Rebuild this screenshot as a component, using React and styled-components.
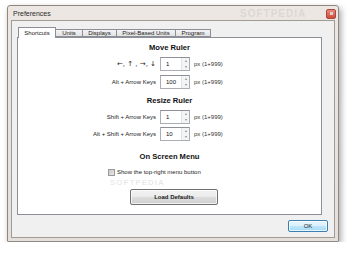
import React from "react";
import styled, { createGlobalStyle } from "styled-components";

const Global = createGlobalStyle`
  body {
    margin: 0;
    background: #ffffff;
    font-family: "Liberation Sans", Arial, sans-serif;
  }
`;

const Window = styled.div`
  position: relative;
  box-sizing: border-box;
  margin: 5px 0 0 7px;
  width: 332px;
  height: 237px;
  border: 1px solid #8e8882;
  border-radius: 3px 3px 1px 1px;
  background: linear-gradient(#ece7e2, #e4dfda);
  padding: 0 3px 3px 3px;
  display: flex;
  flex-direction: column;
  box-shadow: 2px 3px 6px rgba(0, 0, 0, 0.35);
`;

const TitleBar = styled.div`
  height: 14px;
  display: flex;
  align-items: center;
  justify-content: space-between;
  padding: 0 0 0 2px;
`;

const Title = styled.span`
  font-size: 7px;
  color: #2a2a2a;
`;

const CloseButton = styled.div`
  width: 8px;
  height: 8px;
  margin-right: -1px;
  margin-top: 1px;
  border: 1px solid #a8473c;
  border-radius: 2px;
  background: linear-gradient(#e98a7c, #d24b3a);
  display: flex;
  align-items: center;
  justify-content: center;
  &::after {
    content: "";
    width: 3px;
    height: 3px;
    background: #d8d2ce;
  }
`;

const Client = styled.div`
  flex: 1;
  box-sizing: border-box;
  background: #f0f0f0;
  border: 1px solid #a19b96;
  padding: 6px 6px 5px 5px;
  display: flex;
  flex-direction: column;
`;

const TabStrip = styled.div`
  display: flex;
  align-items: flex-end;
  height: 10px;
  position: relative;
  z-index: 1;
  padding-left: 1px;
`;

const Tab = styled.div`
  box-sizing: border-box;
  width: ${(p) => p.$w};
  height: ${(p) => (p.$active ? "11px" : "8px")};
  margin-bottom: ${(p) => (p.$active ? "-1px" : "0")};
  margin-left: ${(p) => (p.$first ? "0" : "-1px")};
  border: 1px solid #8c8f97;
  border-bottom: ${(p) => (p.$active ? "none" : "1px solid #8c8f97")};
  background: ${(p) =>
    p.$active ? "#ffffff" : "linear-gradient(#f4f4f4, #e2e2e2)"};
  font-size: 6px;
  color: #222;
  display: flex;
  align-items: center;
  justify-content: center;
  white-space: nowrap;
  z-index: ${(p) => (p.$active ? 2 : 1)};
`;

const Panel = styled.div`
  box-sizing: border-box;
  width: 305px;
  height: 178px;
  background: #ffffff;
  border: 1px solid #8c8f97;
  display: flex;
  flex-direction: column;
  position: relative;
  padding-top: 5px;
`;

const Heading = styled.div`
  height: 10px;
  line-height: 10px;
  text-align: center;
  font-size: 7.6px;
  font-weight: bold;
  color: #111;
  margin: ${(p) => p.$margin};
`;

const Rows = styled.div`
  display: grid;
  grid-template-columns: 138px 30px auto;
  column-gap: 4px;
  row-gap: ${(p) => p.$gap};
  align-items: center;
`;

const Label = styled.span`
  text-align: right;
  font-size: ${(p) => (p.$arrows ? "7px" : "6px")};
  font-family: ${(p) =>
    p.$arrows ? '"DejaVu Sans", sans-serif' : '"Liberation Sans", Arial, sans-serif'};
  color: #222;
`;

const Spin = styled.div`
  display: flex;
  height: 14px;
  box-sizing: border-box;
  border: 1px solid #abadb3;
  border-top-color: #8e9097;
  background: #fff;
`;

const SpinValue = styled.span`
  flex: 1;
  font-size: 6px;
  color: #111;
  padding-left: 5px;
  display: flex;
  align-items: center;
`;

const SpinArrows = styled.div`
  width: 7px;
  display: flex;
  flex-direction: column;
  border-left: 1px solid #e2e3e6;
  background: #f3f4f6;
`;

const Arrow = styled.div`
  flex: 1;
  display: flex;
  align-items: center;
  justify-content: center;
  &::after {
    content: "";
    border-left: 1.5px solid transparent;
    border-right: 1.5px solid transparent;
    ${(p) =>
      p.$up
        ? "border-bottom: 2px solid #8a8a8a;"
        : "border-top: 2px solid #8a8a8a;"}
  }
`;

const Unit = styled.span`
  font-size: 6px;
  color: #333;
`;

const CheckRow = styled.label`
  display: flex;
  align-items: center;
  gap: 2px;
  padding-left: 90px;
  margin-top: 5px;
  height: 10px;
`;

const Box = styled.span`
  width: 7px;
  height: 7px;
  box-sizing: border-box;
  border: 1px solid #9a9a9a;
  background: linear-gradient(135deg, #c9c9c9, #e8e8e8);
`;

const CheckText = styled.span`
  font-size: 6px;
  color: #222;
`;

const Button = styled.div`
  box-sizing: border-box;
  width: ${(p) => p.$w};
  height: ${(p) => p.$h};
  margin: ${(p) => p.$margin};
  border: 1px solid ${(p) => (p.$default ? "#3c7fb1" : "#707070")};
  border-radius: 2px;
  background: ${(p) =>
    p.$default
      ? "linear-gradient(#eaf6fd 0%, #d9f0fc 50%, #bee6fd 51%, #a7d9f5 100%)"
      : "linear-gradient(#f2f2f2 0%, #ebebeb 50%, #dddddd 51%, #cfcfcf 100%)"};
  box-shadow: inset 0 0 0 1px rgba(255, 255, 255, 0.7);
  display: flex;
  align-items: center;
  justify-content: center;
  font-size: 6px;
  font-weight: ${(p) => (p.$bold ? "bold" : "normal")};
  color: #1a1a1a;
`;

const Footer = styled.div`
  display: flex;
  justify-content: flex-end;
  padding-top: 5px;
`;

const Watermark = styled.div`
  position: absolute;
  left: ${(p) => p.$x};
  top: ${(p) => p.$y};
  font-size: ${(p) => p.$size};
  font-weight: bold;
  letter-spacing: 1px;
  color: rgba(160, 160, 160, ${(p) => p.$alpha});
  pointer-events: none;
  white-space: nowrap;
`;

const Spinner = ({ value }) => (
  <Spin>
    <SpinValue>{value}</SpinValue>
    <SpinArrows>
      <Arrow $up />
      <Arrow />
    </SpinArrows>
  </Spin>
);

const tabs = [
  { name: "Shortcuts", w: "38px" },
  { name: "Units", w: "28px" },
  { name: "Displays", w: "35px" },
  { name: "Pixel-Based Units", w: "60px" },
  { name: "Program", w: "36px" },
];

const Field = ({ label, value, arrows }) => (
  <>
    <Label $arrows={arrows}>{label}</Label>
    <Spinner value={value} />
    <Unit>px (1+999)</Unit>
  </>
);

export default function App() {
  return (
    <>
      <Global />
      <Window>
        <TitleBar>
          <Title>Preferences</Title>
          <CloseButton />
        </TitleBar>
        <Watermark $x="232px" $y="2px" $size="10px" $alpha="0.22">
          SOFTPEDIA
        </Watermark>
        <Client>
          <TabStrip>
            {tabs.map((t, i) => (
              <Tab key={t.name} $w={t.w} $active={i === 0} $first={i === 0}>
                {t.name}
              </Tab>
            ))}
          </TabStrip>
          <Panel>
            <Heading $margin="0 0 4px 0">Move Ruler</Heading>
            <Rows $gap="4px">
              <Field label="←, ↑ , →, ↓" value="1" arrows />
              <Field label="Alt + Arrow Keys" value="100" />
            </Rows>
            <Heading $margin="7px 0 4px 0">Resize Ruler</Heading>
            <Rows $gap="3px">
              <Field label="Shift + Arrow Keys" value="1" />
              <Field label="Alt + Shift + Arrow Keys" value="10" />
            </Rows>
            <Heading $margin="11px 0 0 0">On Screen Menu</Heading>
            <CheckRow>
              <Box />
              <CheckText>Show the top-right menu button</CheckText>
            </CheckRow>
            <Button $w="88px" $h="16px" $margin="12px 0 0 112px" $bold>
              Load Defaults
            </Button>
            <Watermark $x="92px" $y="140px" $size="8px" $alpha="0.25">
              SOFTPEDIA
            </Watermark>
          </Panel>
          <Footer>
            <Button $w="40px" $h="12px" $margin="0" $default>
              OK
            </Button>
          </Footer>
        </Client>
      </Window>
    </>
  );
}
